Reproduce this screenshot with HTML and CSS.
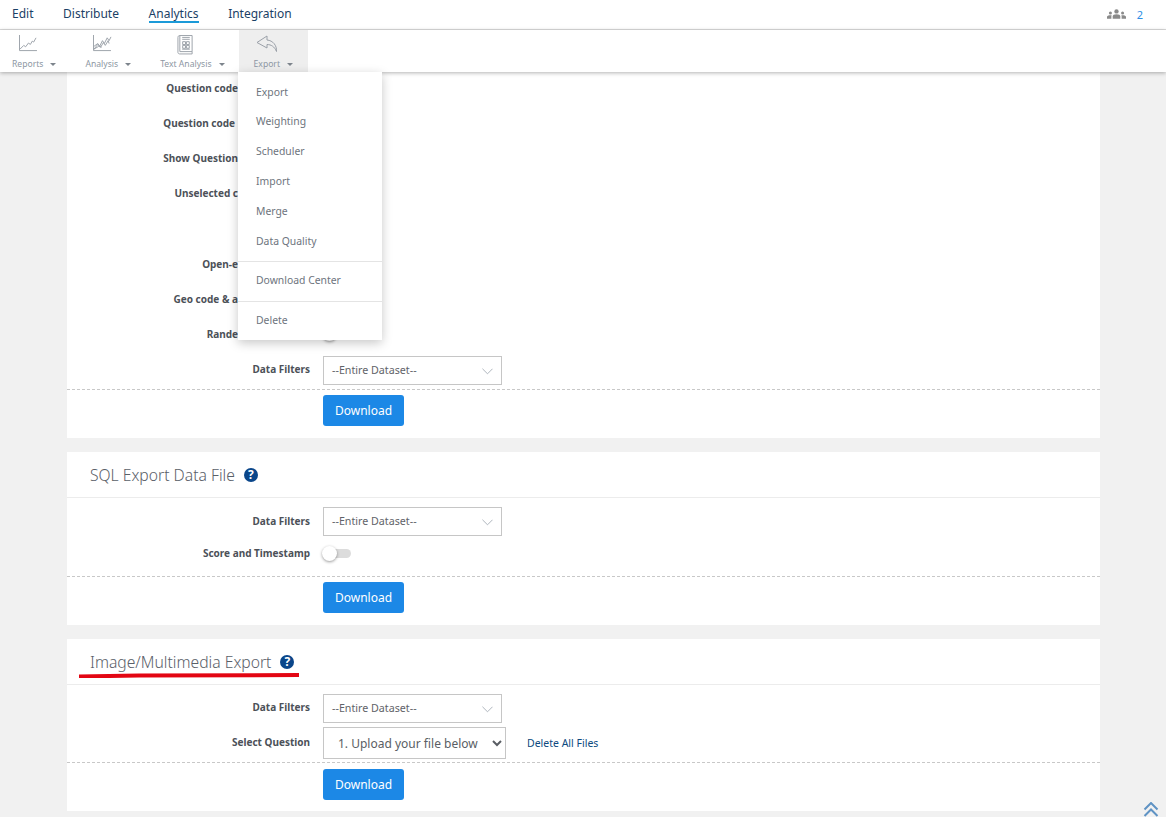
FILE: index.html
```html
<!DOCTYPE html>
<html lang="en">
<head>
<meta charset="utf-8">
<title>Export</title>
<link rel="stylesheet" href="styles.css">
</head>
<body>
<header class="topbar">
  <nav class="nav">
    <a class="nav-link">Edit</a>
    <a class="nav-link">Distribute</a>
    <a class="nav-link active">Analytics</a>
    <a class="nav-link">Integration</a>
  </nav>
  <div class="users">
    <svg class="users-icon" viewBox="0 0 20 10" width="19" height="10"><circle cx="10" cy="2.300" r="2.300"/><path d="M6 10V7.500C6 6 7.500 5.200 10 5.200s4 .8 4 2.300V10z"/><circle cx="3.600" cy="4" r="1.600"/><path d="M0 10V8C0 6.800 1.500 6.200 3.600 6.200c.6 0 1 .1 1.400.2-.3.4-.4.8-.4 1.200V10z"/><circle cx="16.400" cy="4" r="1.600"/><path d="M20 10V8c0-1.200-1.500-1.800-3.600-1.800-.6 0-1 .1-1.400.2.300.4.400.8.400 1.200V10z"/></svg>
    <span class="users-count">2</span>
  </div>
</header>
<div class="toolbar">
  <div class="tool first">
    <svg class="tool-icon" viewBox="0 0 21 18" width="20" height="17"><path d="M1.500 0v16.500H20M2 15l4-4 2 1.500 3-4 2 1.500 2-3.500 1.500 1L19 3"/></svg>
    <span class="tool-label">Reports<i class="caret"></i></span>
  </div>
  <div class="tool">
    <svg class="tool-icon" viewBox="0 0 21 18" width="20" height="17"><path d="M1.500 0v16.500H20M2 15l4-5 2 2 3-6 2 3 3-6 2 3 2-4M2 12l4-3 3 4 3-5 2 3 3-5 1 3M2 15l5-3 3 1"/></svg>
    <span class="tool-label">Analysis<i class="caret"></i></span>
  </div>
  <div class="tool">
    <svg class="tool-icon icon-tall" viewBox="0 0 18 21" width="17" height="21"><path d="M3 1h13v17H3zM3 1C1.500 1 1 2 1 3v16c0 1 1 1.500 2 1.500h13V18M5.500 3h8M5.500 5h8M5.500 15.500h8M6 7.500h3v3H6zM10 7.500h3v3h-3zM6 11.500h3v3H6zM10 11.500h3v3h-3z"/></svg>
    <span class="tool-label">Text Analysis<i class="caret"></i></span>
  </div>
  <div class="tool open">
    <svg class="tool-icon" viewBox="0 0 22 18" width="22" height="18"><path d="M11 1L1 7.500l10 5.500V9.500c4 0 7.500 2 9.500 7 .5-6-3.500-11-9.500-11.500z"/></svg>
    <span class="tool-label">Export<i class="caret"></i></span>
  </div>
</div>
<div class="menu">
  <a class="menu-item item-first">Export</a>
  <a class="menu-item">Weighting</a>
  <a class="menu-item">Scheduler</a>
  <a class="menu-item">Import</a>
  <a class="menu-item">Merge</a>
  <a class="menu-item">Data Quality</a>
  <hr class="menu-sep">
  <a class="menu-item item-wide">Download Center</a>
  <hr class="menu-sep">
  <a class="menu-item">Delete</a>
</div>
<main class="main">
  <section class="card card-first">
    <div class="rows">
      <div class="row"><label class="label clip">Question code</label></div>
      <div class="row"><label class="label clip clip-in">Question code</label></div>
      <div class="row"><label class="label clip">Show Question</label></div>
      <div class="row tall"><label class="label clip">Unselected c</label></div>
      <div class="row"><label class="label clip">Open-e</label></div>
      <div class="row"><label class="label clip">Geo code &amp; a</label></div>
      <div class="row"><label class="label clip">Rande</label><span class="toggle behind"><i class="knob"></i></span></div>
      <div class="row last">
        <label class="label">Data Filters</label>
        <div class="fake-select">--Entire Dataset--<svg class="chev" viewBox="0 0 12 7" width="11" height="7"><path d="M.5.5L6 6 11.500.5"/></svg></div>
      </div>
    </div>
    <div class="actions"><button class="btn">Download</button></div>
  </section>
  <section class="card">
    <div class="card-head"><h2 class="title">SQL Export Data File</h2><span class="help">?</span></div>
    <div class="rows rows-compact sql">
      <div class="row-line">
        <label class="label">Data Filters</label>
        <div class="fake-select">--Entire Dataset--<svg class="chev" viewBox="0 0 12 7" width="11" height="7"><path d="M.5.5L6 6 11.500.5"/></svg></div>
      </div>
      <div class="row-line toggle-line"><label class="label">Score and Timestamp</label><span class="toggle"><i class="knob"></i></span></div>
    </div>
    <div class="actions"><button class="btn">Download</button></div>
  </section>
  <section class="card">
    <div class="card-head"><h2 class="title">Image/Multimedia Export</h2><span class="help">?</span></div>
    <div class="rows rows-compact media">
      <div class="row-line">
        <label class="label">Data Filters</label>
        <div class="fake-select">--Entire Dataset--<svg class="chev" viewBox="0 0 12 7" width="11" height="7"><path d="M.5.5L6 6 11.500.5"/></svg></div>
      </div>
      <div class="row-line">
        <label class="label">Select Question</label>
        <select class="native-select"><option>1. Upload your file below</option></select>
        <a class="link">Delete All Files</a>
      </div>
    </div>
    <div class="actions actions-low"><button class="btn">Download</button></div>
    <svg class="scribble" viewBox="0 0 220 5" width="220" height="5"><path d="M0 3.500L60 2.500 220 2"/></svg>
  </section>
</main>
<svg class="to-top" viewBox="0 0 16 15" width="16" height="15"><path d="M1.500 7.500L8 1l6.500 6.500M1.500 14L8 7.500l6.500 6.500"/></svg>
</body>
</html>
```
FILE: styles.css
```css
* { box-sizing: border-box; }
html, body { height: 100%; }
body {
  margin: 0;
  height: 817px;
  overflow: hidden;
  position: relative;
  display: flex;
  flex-direction: column;
  background: #f1f1f1;
  font-family: "Noto Sans", "Open Sans", sans-serif;
  color: #4c5158;
}
.topbar {
  height: 30px;
  flex: none;
  display: flex;
  align-items: center;
  justify-content: space-between;
  background: #fff;
  border-bottom: 1px solid #dcdcdc;
  padding: 0 23px 1px 12px;
  position: relative;
  z-index: 3;
}
.nav { display: flex; gap: 29.600px; }
.nav-link {
  font-size: 12px;
  line-height: 15px;
  color: #1b3f66;
  border-bottom: 2px solid transparent;
}
.nav-link.active { border-bottom-color: #1b9ad8; }
.users { display: flex; align-items: center; gap: 11px; }
.users-icon { fill: #8a8a8a; }
.users-count { font-size: 11px; color: #2a8ee6; }
.toolbar {
  height: 42px;
  flex: none;
  display: flex;
  background: #fff;
  box-shadow: 0 1px 4px rgba(0,0,0,.3);
  position: relative;
  z-index: 3;
}
.tool {
  display: flex;
  flex-direction: column;
  align-items: center;
  justify-content: space-between;
  padding: 5px 14.500px 1px 14.500px;
}
.tool.first { padding-left: 12px; }
.tool.open { background: #eee; }
.tool-icon { fill: none; stroke: #9aa0a8; stroke-width: 1; display: block; margin-right: 13px; }
.icon-tall { margin-top: -1px; }
.tool-label { font-size: 8.600px; line-height: 13px; color: #8d97a3; white-space: nowrap; }
.caret {
  display: inline-block;
  margin-left: 7px;
  vertical-align: 1px;
  border-top: 3px solid #7d848c;
  border-left: 3.500px solid transparent;
  border-right: 3.500px solid transparent;
}
.menu {
  position: absolute;
  left: 238px;
  top: 72px;
  width: 144px;
  height: 268px;
  z-index: 4;
  background: #fff;
  padding: 5px 0;
  box-shadow: 0 3px 10px rgba(0,0,0,.22);
}
.menu-item {
  display: block;
  height: 30px;
  line-height: 30px;
  padding-left: 18px;
  font-size: 10.400px;
  color: #6d747d;
}
.item-first { height: 29px; }
.item-wide { height: 31px; }
.menu-sep { margin: 5px 0 3px; border: 0; border-top: 1px solid #e4e4e4; }
.main {
  flex: 1;
  min-height: 0;
  overflow: hidden;
  padding: 0 66px 0 67px;
  display: flex;
  flex-direction: column;
  gap: 14px;
}
.card { position: relative; flex: none; background: #fff; }
.card-first { margin-top: -2px; }
.card-head {
  height: 46px;
  padding: 0 23px;
  display: flex;
  align-items: center;
  gap: 9px;
  border-bottom: 1px solid #ececec;
}
.title { margin: 0; font-size: 15.700px; font-weight: 300; color: #5a6068; white-space: nowrap; }
.help {
  width: 14px;
  height: 14px;
  border-radius: 50%;
  background: #0a468a;
  color: #fff;
  font-size: 12px;
  font-weight: 700;
  line-height: 14px;
  text-align: center;
}
.rows { border-bottom: 1px dashed #c8c8c8; }
.row { height: 35px; display: flex; align-items: center; gap: 13px; }
.row.tall { height: 71px; align-items: flex-start; padding-top: 10px; }
.row.last { height: 38px; align-items: flex-start; padding-top: 5px; }
.row.last .label { margin-top: 5px; }
.rows-compact { padding-top: 9px; }
.row-line { display: flex; align-items: center; gap: 13px; }
.row-line .label { margin-bottom: 2px; }
.sql { height: 79px; }
.toggle-line { height: 34px; }
.toggle-line .label { margin-bottom: 0; }
.media { height: 78px; }
.media .row-line + .row-line { margin-top: 4px; }
.media .row-line .label { margin-bottom: 3px; }
.label {
  width: 243px;
  flex: none;
  text-align: right;
  font-size: 10px;
  font-weight: 700;
  line-height: 16px;
  color: #4c5158;
  white-space: nowrap;
}
.label.clip { width: 171px; overflow: hidden; }
.label.clip-in { padding-right: 3px; }
.fake-select {
  width: 179px;
  height: 29px;
  border: 1px solid #c6c6c6;
  padding: 0 8px 2px;
  display: flex;
  align-items: center;
  justify-content: space-between;
  font-size: 10.700px;
  color: #5f6369;
  background: #fff;
}
.chev { fill: none; stroke: #a6aeb7; stroke-width: 1; margin-top: 3px; }
.native-select {
  width: 183px;
  height: 32px;
  border: 1px solid #c6c6c6;
  border-radius: 0;
  background-color: #fff;
  padding: 0 0 0 10px;
  font-family: inherit;
  font-size: 12px;
  color: #5a5e64;
}
.link { margin-left: 8px; font-size: 10.500px; color: #0d4a80; }
.toggle {
  position: relative;
  width: 28px;
  height: 9px;
  border-radius: 5px;
  background: #dcdcdc;
}
.toggle.behind { margin-left: 72px; }
.knob {
  position: absolute;
  left: -1px;
  top: -3px;
  width: 15px;
  height: 15px;
  border-radius: 50%;
  background: #fff;
  box-shadow: 0 1px 3px rgba(0,0,0,.4);
}
.actions { padding: 5px 0 12px 256px; }
.actions-low { padding-top: 6px; padding-bottom: 11px; }
.btn {
  display: block;
  width: 81px;
  height: 31px;
  border: 0;
  border-radius: 3px;
  background: #1c88e6;
  color: #fff;
  font-family: inherit;
  font-size: 12px;
  padding: 0;
}
.scribble {
  position: absolute;
  left: 12px;
  top: 34px;
  fill: none;
  stroke: #e30613;
  stroke-width: 4;
}
.to-top {
  position: absolute;
  right: 7px;
  bottom: 0;
  fill: none;
  stroke: #5f93c4;
  stroke-width: 2;
}
```
